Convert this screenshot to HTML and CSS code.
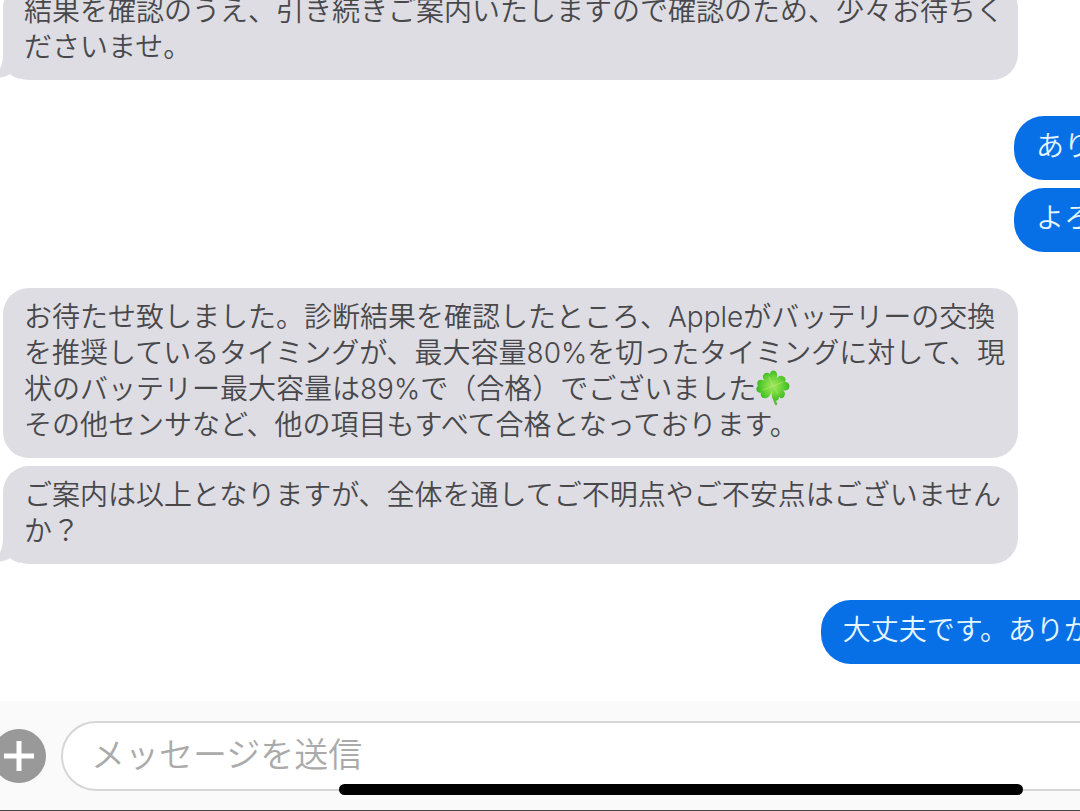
FILE: index.html
```html
<!DOCTYPE html>
<html lang="ja">
<head>
<meta charset="utf-8">
<meta name="viewport" content="width=device-width, initial-scale=1">
<title>メッセージ</title>
<link rel="stylesheet" href="styles.css">
</head>
<body>
<div class="app">
  <main class="thread">
    <div class="group">
      <p class="bubble incoming">結果を確認のうえ、引き続きご案内いたしますので確認のため、少々お待ちくださいませ。<svg class="tail" viewBox="0 0 30 40" aria-hidden="true"><path d="M13 0V14C13 24 10 34 0 37C8 39 16 37 20 34C22 36 26 38 30 39V0Z"/></svg></p>
    </div>
    <div class="group">
      <p class="bubble outgoing">あり</p>
      <p class="bubble outgoing">よろ</p>
    </div>
    <div class="group">
      <p class="bubble incoming">お待たせ致しました。診断結果を確認したところ、Appleがバッテリーの交換を推奨しているタイミングが、最大容量80%を切ったタイミングに対して、現状のバッテリー最大容量は89%で（合格）でございました<svg class="clover" viewBox="0 0 34 36" role="img" aria-label="四つ葉のクローバー"><defs><radialGradient id="leaf" gradientUnits="userSpaceOnUse" cx="17" cy="16" r="17"><stop offset="0" stop-color="#a5e660"/><stop offset=".45" stop-color="#74d83d"/><stop offset="1" stop-color="#35b81d"/></radialGradient></defs><path d="M17 17C17 25 18 30 20 34" fill="none" stroke="#61bd38" stroke-width="2.5" stroke-linecap="round"/><g fill="url(#leaf)"><path d="M17 16C11 13 6 10 7 6C8 2 12 2 14 4C14 0 20 -1 21 4C22 8 19 12 17 16Z"/><path d="M17 16C19 10 22 5 26 6C30 7 30 10 29 12C34 12 35 18 31 20C26 22 21 18 17 16Z"/><path d="M17 16C23 17 29 20 29 24C28 29 25 29 23 27C23 32 17 32 16 27C15 23 16 20 17 16Z"/><path d="M17 16C16 21 14 28 10 28C6 29 4 26 5 23C0 23 -1 18 2 16C0 13 2 9 6 10C10 10 13 14 17 16Z"/></g><path d="M17 16L13 7M17 16L27 12M17 16L22 24M17 16L7 20" stroke="#b4ec72" stroke-width="1" stroke-linecap="round" opacity=".6"/></svg><br>その他センサなど、他の項目もすべて合格となっております。</p>
      <p class="bubble incoming">ご案内は以上となりますが、全体を通してご不明点やご不安点はございませんか？<svg class="tail" viewBox="0 0 30 40" aria-hidden="true"><path d="M13 0V14C13 24 10 34 0 37C8 39 16 37 20 34C22 36 26 38 30 39V0Z"/></svg></p>
    </div>
    <div class="group">
      <p class="bubble outgoing">大丈夫です。ありが</p>
    </div>
  </main>
  <form class="composer">
    <button class="add" type="button" aria-label="追加"><svg viewBox="0 0 54 54" aria-hidden="true"><path d="M27 12V42M12 27H42" stroke="#fff" stroke-width="5"/></svg></button>
    <input class="field" type="text" aria-label="メッセージ" placeholder="メッセージを送信">
    <div class="home-bar"></div>
  </form>
</div>
</body>
</html>
```
FILE: styles.css
```css
* {
  box-sizing: border-box;
}

body {
  margin: 0;
  background: #fff;
  font-family: Inter, "Noto Sans CJK JP", sans-serif;
  overflow: hidden;
}

.app {
  display: flex;
  flex-direction: column;
  height: 100vh;
}

.thread {
  flex: 1;
  min-height: 0;
  display: flex;
  flex-direction: column;
  justify-content: flex-end;
  gap: 36px;
  padding: 0 62px 37px 3px;
  overflow: hidden;
}

.group {
  display: flex;
  flex-direction: column;
  gap: 8px;
}

.bubble {
  position: relative;
  margin: 0;
  border-radius: 26px;
  font-size: 28px;
  font-weight: 350;
  line-height: 36px;
}

.incoming {
  padding: 11px 12px 15px 21px;
  background: #dedde3;
  color: #48484b;
}

.outgoing {
  align-self: flex-end;
  margin-right: -96px;
  padding: 12px 22px 16px;
  border-radius: 30px;
  background: #0870e6;
  color: #e4f6ff;
  white-space: nowrap;
}

.tail {
  position: absolute;
  left: -13px;
  bottom: 0;
  width: 30px;
  height: 40px;
  fill: #dedde3;
}

.clover {
  width: 34px;
  height: 36px;
  margin: -8px 0 -2px;
  vertical-align: middle;
}

.composer {
  position: relative;
  display: flex;
  align-items: center;
  gap: 15px;
  height: 110px;
  border-bottom: 1px solid #444;
  background: #fafafa;
}

.add {
  flex: none;
  width: 54px;
  height: 54px;
  margin-left: -8px;
  padding: 0;
  border: 0;
  border-radius: 50%;
  background: #999;
}

.add svg {
  display: block;
}

.field {
  flex: 1;
  min-width: 0;
  height: 70px;
  margin-right: -40px;
  padding: 0 28px 2px;
  border: 2px solid #d6d6d6;
  border-radius: 35px;
  background: #fff;
  font-family: inherit;
  font-size: 34px;
  font-weight: 350;
}

.field::placeholder {
  color: #aaa;
  opacity: 1;
}

.home-bar {
  position: absolute;
  right: 57px;
  bottom: 15px;
  left: 339px;
  height: 11px;
  border-radius: 6px;
  background: #000;
}
```
